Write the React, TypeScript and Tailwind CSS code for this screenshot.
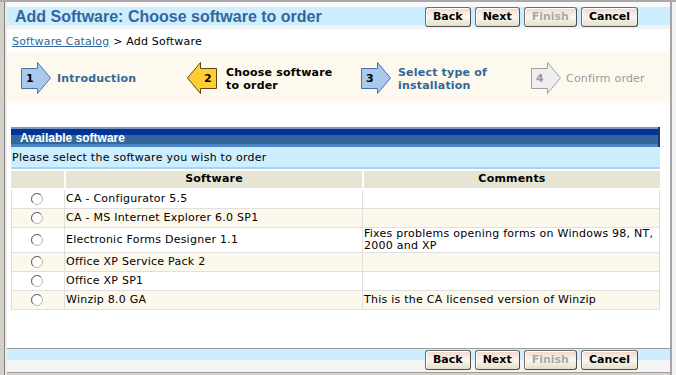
import clsx from "clsx";

const sans = "font-['DejaVu_Sans',Verdana,sans-serif]";

function WizardButton({ label, disabled }: { label: string; disabled?: boolean }) {
  return (
    <button
      disabled={disabled}
      className={clsx(
        "h-[20px] px-[7px] rounded-[3px] border border-[#6f6f6f] border-b-[#4f4f4f] border-r-[#4f4f4f] bg-[linear-gradient(to_bottom,#f1d6ca_0%,#fbf6ef_50%,#e3e0c6_100%)] shadow-[inset_1px_1px_0_#ffffff] text-[11px] leading-[18px] font-bold",
        sans,
        disabled ? "text-[#a8a8a8]" : "text-black"
      )}
    >
      {label}
    </button>
  );
}

function ButtonRow() {
  return (
    <div className="flex gap-[4px] pr-[32px]">
      <WizardButton label="Back" />
      <WizardButton label="Next" />
      <WizardButton label="Finish" disabled />
      <WizardButton label="Cancel" />
    </div>
  );
}

function StepArrow({
  num,
  fill,
  stroke,
  color,
  flip,
}: {
  num: string;
  fill: string;
  stroke: string;
  color: string;
  flip?: boolean;
}) {
  const d = flip
    ? "M29.5 6.5 H13.5 V0.5 L0.5 16 L13.5 31.5 V26.5 H29.5 Z"
    : "M0.5 6.5 H16.5 V0.5 L29.5 16 L16.5 31.5 V26.5 H0.5 Z";
  return (
    <svg width="30" height="32" viewBox="0 0 30 32" className="shrink-0">
      <path d={d} fill={fill} stroke={stroke} strokeWidth="1" />
      <text
        x={flip ? 21 : 9}
        y="20"
        textAnchor="middle"
        fontFamily="DejaVu Sans, Verdana, sans-serif"
        fontWeight="bold"
        fontSize="11"
        fill={color}
      >
        {num}
      </text>
    </svg>
  );
}

function Radio() {
  return (
    <svg width="12" height="12" viewBox="0 0 12 12">
      <circle cx="6" cy="6" r="5.5" fill="#ffffff" stroke="#b8b8b8" />
      <path d="M2.1 9.9 A5.5 5.5 0 0 1 9.9 2.1" fill="none" stroke="#6a6a6a" />
    </svg>
  );
}

const rows = [
  { name: "CA - Configurator 5.5", comment: "" },
  { name: "CA - MS Internet Explorer 6.0 SP1", comment: "" },
  {
    name: "Electronic Forms Designer 1.1",
    comment: "Fixes problems opening forms on Windows 98, NT, 2000 and XP",
  },
  { name: "Office XP Service Pack 2", comment: "" },
  { name: "Office XP SP1", comment: "" },
  { name: "Winzip 8.0 GA", comment: "This is the CA licensed version of Winzip" },
];

export default function App() {
  return (
    <div className="w-[676px] h-[375px] overflow-hidden bg-white flex border-t-2 border-[#a9a9a9]">
      {/* left window frame */}
      <div className="flex shrink-0">
        <div className="w-[4px] bg-[#d4d0c8]" />
        <div className="w-px bg-[#808080]" />
        <div className="w-[2px] bg-[#ececec]" />
      </div>

      <div className="flex-1 flex flex-col min-w-0">
        <div className="h-[5px] bg-[#f9f9f9] shrink-0" />

        {/* title bar */}
        <div className="h-[22px] shrink-0 flex items-start justify-between bg-[linear-gradient(to_bottom,#cceeff_0px,#cceeff_18px,#f3f3f3_18px,#f3f3f3_22px)]">
          <h1 className="pl-[8px] text-[16px] leading-[19px] font-bold text-[#336699] font-['Liberation_Sans',Arial,sans-serif]">
            Add Software: Choose software to order
          </h1>
          <ButtonRow />
        </div>

        {/* breadcrumb */}
        <div className={clsx("h-[23px] shrink-0 flex items-center pl-[5px] pt-[3px] text-[11px] tracking-[0.2px] text-black", sans)}>
          <a href="#" className="text-[#336699] underline">
            Software Catalog
          </a>
          <span>&nbsp;&gt; Add Software</span>
        </div>

        {/* wizard steps */}
        <div
          className={clsx(
            "h-[51px] shrink-0 bg-[#fef9ee] grid grid-cols-[166px_174px_170px_1fr] items-center pl-[14px] text-[11px] leading-[13px] font-bold tracking-[0.2px]",
            sans
          )}
        >
          <div className="flex items-center gap-[6px]">
            <StepArrow num="1" fill="#a9c9ef" stroke="#4872a4" color="#000000" />
            <span className="text-[#336699] pt-[2px]">Introduction</span>
          </div>
          <div className="flex items-center gap-[9px]">
            <StepArrow num="2" fill="#ffcc33" stroke="#5a4a10" color="#000000" flip />
            <span className="text-black pt-[2px]">
              Choose software
              <br />
              to order
            </span>
          </div>
          <div className="flex items-center gap-[7px]">
            <StepArrow num="3" fill="#a9c9ef" stroke="#4872a4" color="#000000" />
            <span className="text-[#336699] pt-[2px]">
              Select type of
              <br />
              installation
            </span>
          </div>
          <div className="flex items-center gap-[5px]">
            <StepArrow num="4" fill="#efefef" stroke="#a0a0a0" color="#9a9a9a" />
            <span className="text-[#9a9a9a] font-normal pt-[2px]">Confirm order</span>
          </div>
        </div>

        <div className="h-[24px] shrink-0" />

        {/* software panel */}
        <div className={clsx("ml-[4px] mr-[10px] shrink-0", sans)}>
          <div className="h-[20px] flex items-center pl-[9px] border-r-2 border-[#1b3a66] bg-[linear-gradient(to_bottom,#8098bc_0px,#8098bc_2px,#003399_2px,#003399_8px,#336699_8px,#336699_17px,#4a86c6_17px,#4a86c6_20px)]">
            <span className="text-white font-bold text-[12px] font-['Liberation_Sans',Arial,sans-serif] pt-px">
              Available software
            </span>
          </div>
          <div className="h-[22px] flex items-center pl-[1px] pt-[2px] bg-[#cceeff] border-b-2 border-[#a9d3f2] text-[11px] tracking-[0.25px] text-black">
            Please select the software you wish to order
          </div>

          <div className="mt-[2px] h-[18px] grid grid-cols-[53px_298px_298px] text-[11px] font-bold tracking-[0.2px] text-black">
            <div className="bg-[#e6e5d4] border-b-2 border-white" />
            <div className="bg-[#e6e5d4] border-l-2 border-b-2 border-white flex items-center justify-center">
              Software
            </div>
            <div className="bg-[#e6e5d4] border-l-2 border-b-2 border-white flex items-center justify-center">
              Comments
            </div>
          </div>

          <div className="mt-[1px] border-x border-[#dddddd] text-[11px] leading-[12px] tracking-[0.25px] text-black">
            {rows.map((row, i) => (
              <div
                key={row.name}
                className={clsx(
                  "grid grid-cols-[52px_298px_1fr] min-h-[19px] border-b border-[#e0e0e0]",
                  i % 2 === 1 ? "bg-[#fdf8ec]" : "bg-white"
                )}
              >
                <div className="flex items-center justify-center pr-[2px]">
                  <Radio />
                </div>
                <div className="border-l border-[#e0e0e0] pl-[1px] flex items-center">{row.name}</div>
                <div className="border-l border-[#e0e0e0] pl-[1px] pr-[2px] flex items-center">
                  {row.comment}
                </div>
              </div>
            ))}
          </div>
        </div>

        <div className="flex-1" />

        {/* footer bar */}
        <div className="shrink-0 border-y border-[#9c9c9c] h-[25px] flex items-start justify-end pt-px bg-[linear-gradient(to_bottom,#cceeff_0px,#cceeff_11px,#f4f4f4_11px,#f4f4f4_23px)]">
          <ButtonRow />
        </div>
        <div className="h-[2px] shrink-0 bg-[#d4d0c8]" />
      </div>

      {/* right window frame */}
      <div className="flex shrink-0">
        <div className="w-[2px] bg-[#a4a4a4]" />
        <div className="w-[4px] bg-[#f2f2f2]" />
      </div>
    </div>
  );
}
